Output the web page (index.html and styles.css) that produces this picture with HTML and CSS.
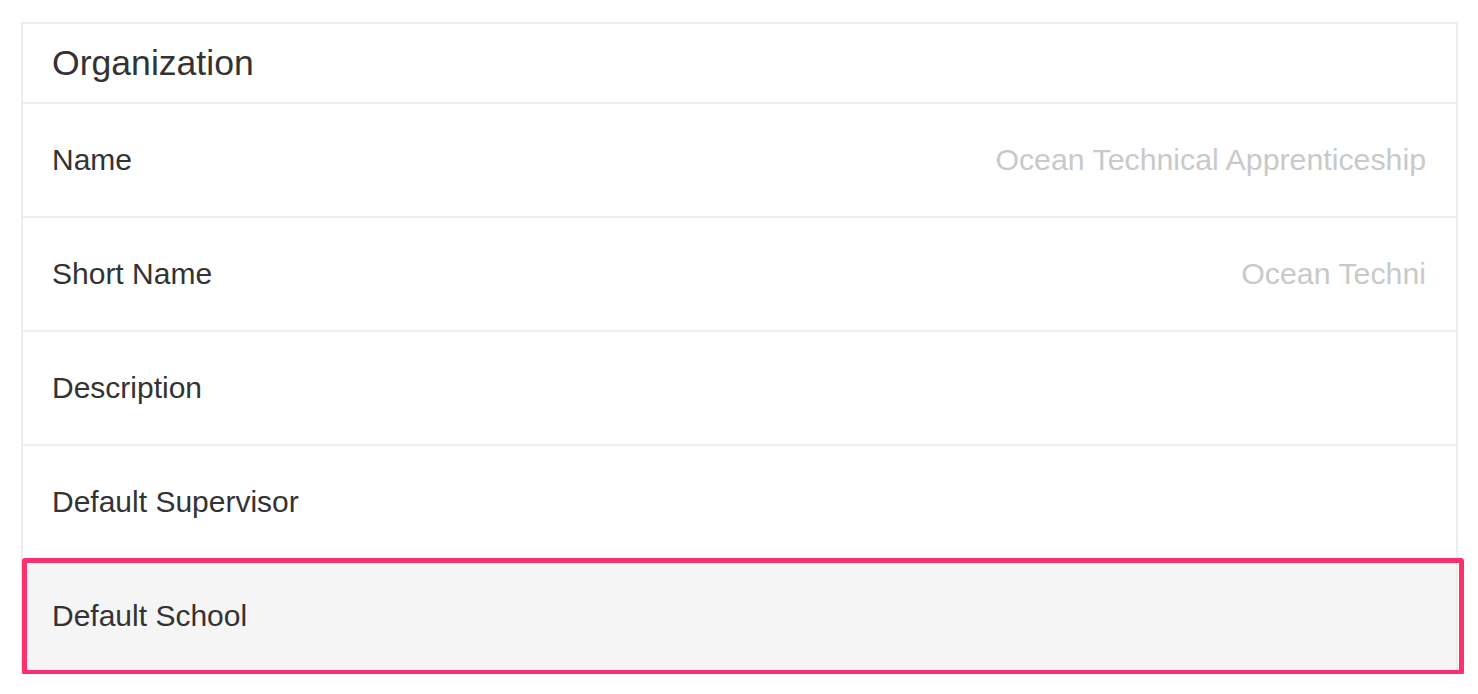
FILE: index.html
```html
<!DOCTYPE html>
<html lang="en">
<head>
  <meta charset="UTF-8">
  <title>Organization</title>
  <link rel="stylesheet" href="styles.css">
</head>
<body>

<div class="card">
  <div class="card-header">Organization</div>

  <div class="row">
    <span class="label">Name</span>
    <span class="value">Ocean Technical Apprenticeship</span>
  </div>

  <div class="row">
    <span class="label">Short Name</span>
    <span class="value">Ocean Techni</span>
  </div>

  <div class="row">
    <span class="label">Description</span>
  </div>

  <div class="row">
    <span class="label">Default Supervisor</span>
  </div>

  <div class="row row-active">
    <span class="label">Default School</span>
  </div>
</div>

</body>
</html>
```

FILE: styles.css
```css
body {
  margin: 0;
  padding: 22px 20px 0 21px;
  background-color: #fff;
  color: #333;
  font-family: "Liberation Sans", Arial, sans-serif;
}
.card {
  border: 2px solid #ededed;
  background-color: #fff;
}
.card-header {
  height: 78px;
  display: flex;
  align-items: center;
  padding: 0 30px 0 29px;
  font-size: 35.6px;
  border-bottom: 2px solid #ededed;
}
.row {
  height: 112px;
  display: flex;
  align-items: center;
  justify-content: space-between;
  padding: 0 30px 0 29px;
  font-size: 30px;
  border-bottom: 2px solid #ededed;
}
.row:last-child {
  border-bottom: none;
}
.value {
  color: #c9c9c9;
  font-size: 30.3px;
}
.row-active {
  position: relative;
  background-color: #f5f5f5;
}
.row-active::after {
  content: "";
  position: absolute;
  top: -2px;
  left: -1px;
  right: -8px;
  bottom: -3px;
  border: 5px solid #fd2f6c;
  border-radius: 3px;
}
```
